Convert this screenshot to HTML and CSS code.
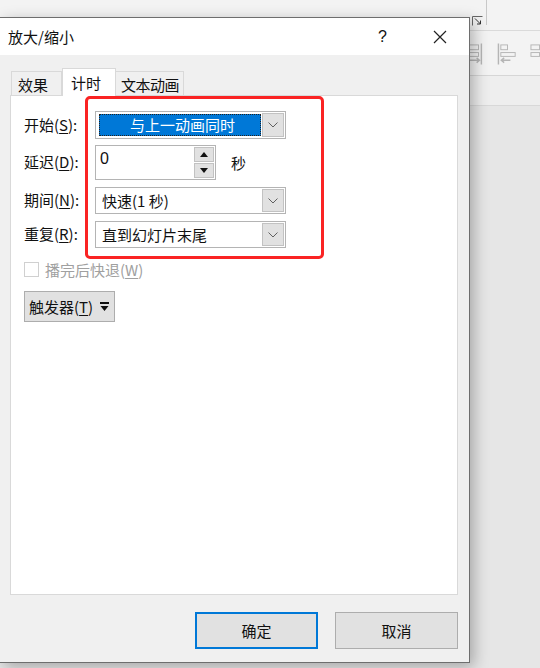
FILE: index.html
```html
<!DOCTYPE html>
<html lang="zh-CN">
<head>
  <meta charset="UTF-8">
  <title>放大/缩小</title>
  <link rel="stylesheet" href="styles.css">
</head>
<body>

<div class="app">
  <div class="topbar">
    <svg class="launcher" width="11" height="10" viewBox="0 0 11 10">
      <path d="M0.5 9.5V0.5H10.5" fill="none" stroke="#666"/>
      <path d="M3 2.5L8.5 8M8.5 4.5V8H5" fill="none" stroke="#333"/>
    </svg>
    <div class="topbar-sep"></div>
  </div>
  <div class="ribbon">
    <svg width="16" height="22" viewBox="0 0 16 22">
      <rect x="1" y="1.5" width="10" height="5" fill="none" stroke="#b5b5b5"/>
      <rect x="1" y="9.5" width="10" height="4" fill="none" stroke="#b5b5b5"/>
      <path d="M14 0V22M2 17.5H12M9 15L12 17.5L9 20" fill="none" stroke="#b5b5b5" stroke-width="1.5"/>
    </svg>
    <svg width="20" height="22" viewBox="0 0 20 22">
      <path d="M1.5 0V22M5 17.5H14M7.5 15L4.5 17.5L7.5 20" fill="none" stroke="#b5b5b5" stroke-width="1.5"/>
      <rect x="4" y="1.5" width="7" height="5" fill="none" stroke="#b5b5b5"/>
      <rect x="4" y="9.5" width="15" height="4" fill="none" stroke="#b5b5b5"/>
    </svg>
    <svg width="10" height="22" viewBox="0 0 10 22">
      <rect x="1" y="1.5" width="9" height="5" fill="none" stroke="#b5b5b5"/>
      <rect x="1" y="9.5" width="9" height="4" fill="none" stroke="#b5b5b5"/>
    </svg>
  </div>
  <div class="strip"></div>
  <div class="workspace"></div>
</div>

<div class="dialog">
  <div class="titlebar">
    <span class="title">放大/缩小</span>
    <span class="help">?</span>
    <svg class="close" width="14" height="14" viewBox="0 0 14 14">
      <path d="M1 1L13 13M13 1L1 13" stroke="#222" stroke-width="1.2"/>
    </svg>
  </div>

  <div class="tabs">
    <div class="tab">效果</div>
    <div class="tab active">计时</div>
    <div class="tab">文本动画</div>
  </div>

  <div class="panel">
    <div class="fields">
      <div class="row row-start">
        <label>开始(<u>S</u>):</label>
        <div class="select focused">
          <div class="value">与上一动画同时</div>
          <div class="arrow"><svg width="10" height="6" viewBox="0 0 10 6"><path d="M0.5 0.5L5 5L9.5 0.5" fill="none" stroke="#606060"/></svg></div>
        </div>
      </div>
      <div class="row row-delay">
        <label>延迟(<u>D</u>):</label>
        <div class="spin">
          <div class="spin-value">0</div>
          <div class="spin-buttons">
            <div class="spin-btn"><svg width="8" height="5" viewBox="0 0 8 5"><path d="M0 5L4 0L8 5Z" fill="#111"/></svg></div>
            <div class="spin-btn"><svg width="8" height="5" viewBox="0 0 8 5"><path d="M0 0L4 5L8 0Z" fill="#111"/></svg></div>
          </div>
        </div>
        <span class="unit">秒</span>
      </div>
      <div class="row row-dur">
        <label>期间(<u>N</u>):</label>
        <div class="select">
          <div class="value">快速(1 秒)</div>
          <div class="arrow"><svg width="10" height="6" viewBox="0 0 10 6"><path d="M0.5 0.5L5 5L9.5 0.5" fill="none" stroke="#606060"/></svg></div>
        </div>
      </div>
      <div class="row row-repeat">
        <label>重复(<u>R</u>):</label>
        <div class="select">
          <div class="value">直到幻灯片末尾</div>
          <div class="arrow"><svg width="10" height="6" viewBox="0 0 10 6"><path d="M0.5 0.5L5 5L9.5 0.5" fill="none" stroke="#606060"/></svg></div>
        </div>
      </div>
    </div>

    <div class="check">
      <span class="box"></span>
      <span>播完后快退(<u>W</u>)</span>
    </div>

    <div class="trigger">
      <span>触发器(<u>T</u>)</span>
      <svg width="9" height="10" viewBox="0 0 9 10"><path d="M0 0H9V2H0Z M0.5 4H8.5L4.5 9Z" fill="#111"/></svg>
    </div>

    <div class="mark"></div>
  </div>

  <div class="footer">
    <div class="btn default">确定</div>
    <div class="btn">取消</div>
  </div>
</div>

</body>
</html>
```

FILE: styles.css
```css
body {
  margin: 0;
  overflow: hidden;
  font-family: "Noto Sans CJK SC", "Noto Sans", sans-serif;
  font-size: 15px;
  color: #111;
  background-color: #e6e6e6;
}

u {
  text-decoration-thickness: 1px;
  text-underline-offset: 2px;
}

/* app behind the dialog */
.app {
  display: flex;
  flex-direction: column;
  height: 100vh;
}

.topbar {
  height: 31px;
  background-color: #f3f3f3;
  border-bottom: 1px solid #dadada;
  box-sizing: border-box;
  display: flex;
  align-items: flex-start;
  padding-left: 472px;
}

.launcher {
  margin-top: 16px;
}

.topbar-sep {
  width: 1px;
  height: 25px;
  background-color: #c8c8c8;
  margin-left: 3px;
}

.ribbon {
  height: 45px;
  background-color: #f3f3f3;
  border-bottom: 1px solid #d6d6d6;
  box-sizing: border-box;
  display: flex;
  align-items: flex-start;
  gap: 14px;
  padding: 12px 0 0 468px;
}

.strip {
  height: 29px;
  background-color: #eeeeee;
  border-bottom: 1px solid #d8d8d8;
}

.workspace {
  flex: 1;
  background-color: #e6e6e6;
}

/* dialog window */
.dialog {
  position: absolute;
  top: 17px;
  left: 0;
  width: 470px;
  height: 646px;
  box-sizing: border-box;
  background-color: #f0f0f0;
  border: 1px solid #6e6e6e;
  border-left: none;
  box-shadow: 4px 4px 14px rgba(0, 0, 0, 0.28);
  display: flex;
  flex-direction: column;
}

.titlebar {
  height: 37px;
  background-color: #fff;
  display: flex;
  align-items: center;
  padding-left: 8px;
  line-height: 1;
}

.title {
  flex: 1;
  font-size: 15px;
}

.help {
  font-family: "Liberation Sans", sans-serif;
  font-size: 16px;
  margin-right: 46px;
}

.close {
  margin-right: 22px;
}

.tabs {
  display: flex;
  align-items: flex-end;
  margin: 12px 0 0 11px;
  height: 28px;
}

.tab {
  height: 24px;
  box-sizing: border-box;
  border: 1px solid #d9d9d9;
  border-bottom: none;
  padding: 0 6px;
  line-height: 25px;
  background-color: #f0f0f0;
}

.tab:first-child {
  width: 51px;
}

.tab.active {
  height: 28px;
  width: 54px;
  background-color: #fff;
  line-height: 27px;
  padding: 0 8px;
  margin-bottom: -1px;
  position: relative;
  z-index: 1;
}

.tab:last-child {
  padding: 0 4px 0 5px;
  border-left: none;
  letter-spacing: -0.5px;
}

.panel {
  position: relative;
  height: 500px;
  margin: 0 11px 0 10px;
  box-sizing: border-box;
  background-color: #fff;
  border: 1px solid #d9d9d9;
  padding: 15px 0 0 13px;
}

.fields {
  display: flex;
  flex-direction: column;
}

.row {
  display: flex;
  align-items: center;
}

.row label {
  width: 71px;
  line-height: 1;
  padding-bottom: 2px;
}

.row-start { height: 28px; }
.row-delay { height: 35px; margin-top: 6px; }
.row-dur { height: 27px; margin-top: 7px; }
.row-repeat { height: 27px; margin-top: 7px; }

.select {
  width: 191px;
  height: 100%;
  box-sizing: border-box;
  border: 1px solid #b4b4b4;
  display: flex;
  align-items: stretch;
  padding: 1px;
}

.select .value {
  flex: 1;
  padding-left: 5px;
  line-height: 24px;
}

.select.focused .value {
  background-color: #0078d7;
  color: #fff;
  text-align: center;
  outline: 1px dotted #222;
  outline-offset: -1px;
  margin: 1px 1px 1px 2px;
  line-height: 22px;
}

.arrow {
  width: 20px;
  background-color: #e1e1e1;
  border: 1px solid #c2c2c2;
  display: flex;
  align-items: center;
  justify-content: center;
}

.spin {
  width: 121px;
  height: 100%;
  box-sizing: border-box;
  border: 1px solid #b4b4b4;
  display: flex;
}

.spin-value {
  flex: 1;
  padding: 5px 0 0 4px;
  line-height: 1;
  font-family: "Liberation Sans", sans-serif;
  font-size: 16px;
}

.spin-buttons {
  width: 20px;
  display: flex;
  flex-direction: column;
  gap: 1px;
  padding: 1px 1px 1px 0;
}

.spin-btn {
  flex: 1;
  background-color: #e1e1e1;
  border: 1px solid #c2c2c2;
  display: flex;
  align-items: center;
  justify-content: center;
}

.unit {
  margin-left: 15px;
  line-height: 1;
}

.check {
  display: flex;
  align-items: center;
  gap: 6px;
  margin-top: 14px;
  color: #a0a0a0;
  line-height: 1;
}

.check .box {
  width: 13px;
  height: 13px;
  border: 1px solid #d0d0d0;
  background-color: #fff;
}

.trigger {
  display: inline-flex;
  align-items: center;
  gap: 7px;
  margin-top: 14px;
  width: 91px;
  height: 31px;
  box-sizing: border-box;
  padding-left: 4px;
  background-color: #e1e1e1;
  border: 1px solid #adadad;
  line-height: 1;
}

.mark {
  position: absolute;
  left: 74px;
  top: 0;
  width: 239px;
  height: 163px;
  box-sizing: border-box;
  border: 3px solid #fa2323;
  border-radius: 5px;
}

.footer {
  display: flex;
  justify-content: flex-end;
  gap: 17px;
  padding: 17px 11px 0 0;
}

.btn {
  width: 123px;
  height: 37px;
  box-sizing: border-box;
  background-color: #e1e1e1;
  border: 1px solid #adadad;
  display: flex;
  align-items: center;
  justify-content: center;
  line-height: 1;
}

.btn.default {
  border: 2px solid #0078d7;
}
```
